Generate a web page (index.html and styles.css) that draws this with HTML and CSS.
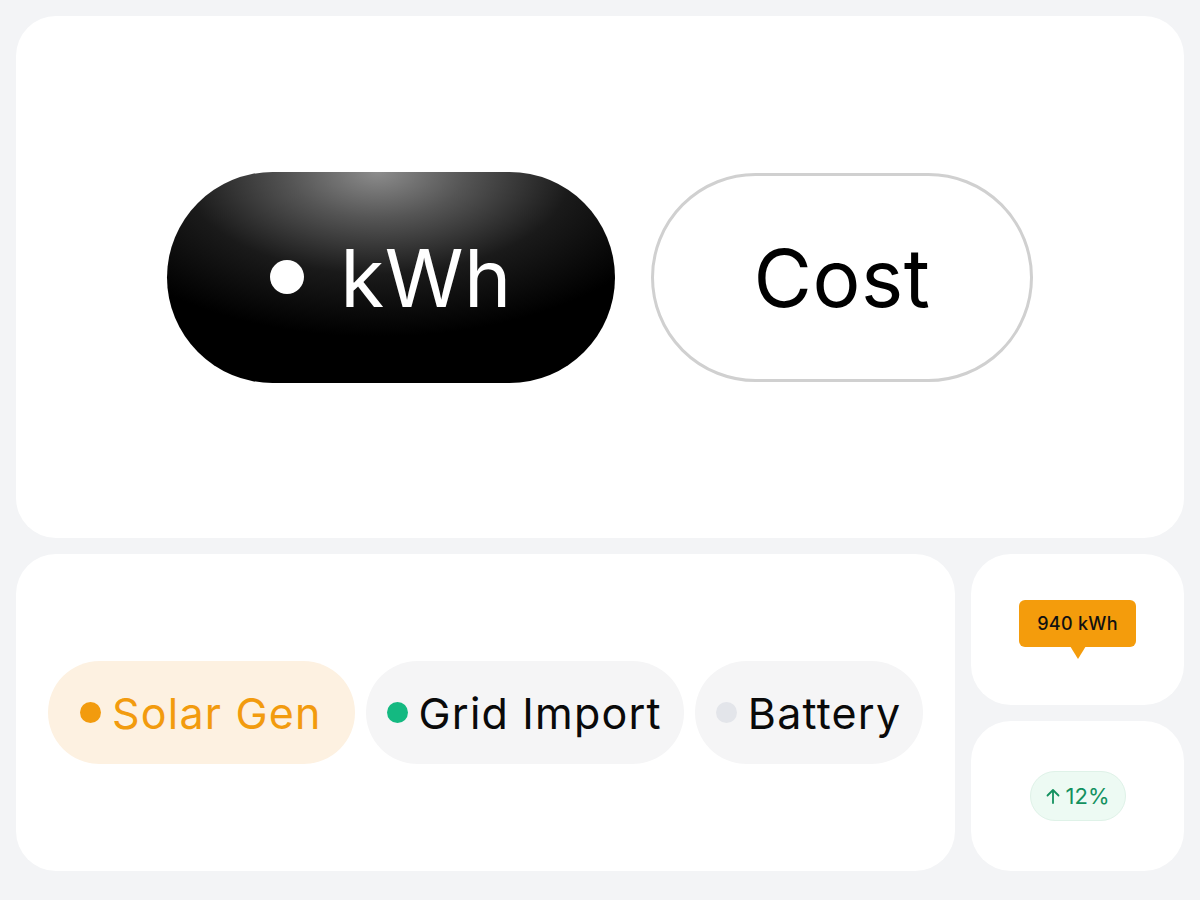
FILE: index.html
```html
<!DOCTYPE html>
<html lang="en">
<head>
<meta charset="utf-8">
<title>Energy toggles</title>
<link rel="stylesheet" href="styles.css">
</head>
<body>
<main class="page">
  <section class="card hero">
    <div class="toggle">
      <button class="pill pill-active"><span class="pill-dot"></span><span>kWh</span></button>
      <button class="pill pill-outline"><span>Cost</span></button>
    </div>
  </section>
  <div class="bottom">
    <section class="card legend">
      <span class="chip chip-solar"><span class="chip-dot"></span>Solar Gen</span>
      <span class="chip chip-grid"><span class="chip-dot"></span>Grid Import</span>
      <span class="chip chip-battery"><span class="chip-dot"></span>Battery</span>
    </section>
    <div class="side">
      <section class="card mini">
        <div class="tooltip">940 kWh</div>
      </section>
      <section class="card mini">
        <div class="delta">
          <svg class="delta-arrow" viewBox="0 0 14 16" width="14" height="16" aria-hidden="true">
            <path d="M7 15V2M1.5 7.5L7 2l5.5 5.5" fill="none" stroke="currentColor" stroke-width="1.8" stroke-linecap="round" stroke-linejoin="round"/>
          </svg>
          <span>12%</span>
        </div>
      </section>
    </div>
  </div>
</main>
</body>
</html>
```
FILE: styles.css
```css
* { box-sizing: border-box; }
html, body { margin: 0; padding: 0; }
body {
  background: #f3f4f6;
  font-family: Inter, "Noto Sans", "Liberation Sans", sans-serif;
  color: #0a0a0a;
}
.page {
  padding: 16px;
  display: flex;
  flex-direction: column;
  gap: 16px;
}
.card {
  background: #ffffff;
  border-radius: 40px;
}
.hero {
  height: 522px;
  display: flex;
  align-items: center;
  justify-content: center;
}
.toggle {
  display: flex;
  gap: 36px;
  align-items: center;
}
.pill {
  height: 211px;
  border-radius: 999px;
  display: flex;
  align-items: center;
  justify-content: center;
  font-family: inherit;
  font-size: 80px;
  font-weight: 400;
  letter-spacing: 0.5px;
  margin: 0;
  cursor: pointer;
}
.pill-active {
  width: 448px;
  gap: 36px;
  border: none;
  color: #ffffff;
  background: radial-gradient(ellipse 70% 78% at 47% 0%, #8c8c8c 0%, #555 28%, #1a1a1a 62%, #000 100%);
  padding: 0 100px;
}
.pill-dot {
  width: 34px;
  height: 34px;
  border-radius: 50%;
  background: #ffffff;
  flex: none;
}
.pill-outline {
  width: 382px;
  background: #ffffff;
  border: 3px solid #d0d0d0;
  color: #000;
  height: 209px;
}
.bottom {
  display: flex;
  gap: 16px;
  height: 317px;
}
.legend {
  width: 939px;
  flex: none;
  display: flex;
  align-items: center;
  gap: 11px;
  padding: 0 32px;
}
.chip {
  flex: none;
  white-space: nowrap;
  height: 103px;
  border-radius: 999px;
  display: flex;
  align-items: center;
  gap: 11px;
  padding: 0 22px 0 21px;
  font-size: 43px;
  letter-spacing: 1.2px;
  background: #f5f5f6;
  color: #0a0a0a;
}
.chip-dot {
  width: 21px;
  height: 21px;
  border-radius: 50%;
  flex: none;
}
.chip-solar {
  background: #fdf1e1;
  color: #f29b0e;
  padding: 0 33px 0 32px;
}
.chip-solar .chip-dot { background: #f29b0e; }
.chip-grid .chip-dot { background: #14b981; }
.chip-battery .chip-dot { background: #e3e5ea; }
.side {
  flex: 1;
  display: flex;
  flex-direction: column;
  gap: 16px;
}
.mini {
  flex: 1;
  display: flex;
  align-items: center;
  justify-content: center;
}
.tooltip {
  position: relative;
  background: #f49c0c;
  color: #111;
  font-size: 18px;
  font-weight: 500;
  letter-spacing: 0.3px;
  width: 117px;
  height: 47px;
  border-radius: 6px;
  display: flex;
  align-items: center;
  justify-content: center;
  margin-top: -12px;
}
.tooltip::after {
  content: "";
  position: absolute;
  left: 50%;
  bottom: -12px;
  margin-left: -8px;
  border-left: 8px solid transparent;
  border-right: 8px solid transparent;
  border-top: 13px solid #f49c0c;
}
.delta {
  height: 50px;
  width: 96px;
  border-radius: 999px;
  background: #edfaf3;
  border: 1px solid #dff2e8;
  color: #13915f;
  font-size: 22px;
  display: flex;
  align-items: center;
  justify-content: center;
  gap: 6px;
}
.delta-arrow { flex: none; }
```
